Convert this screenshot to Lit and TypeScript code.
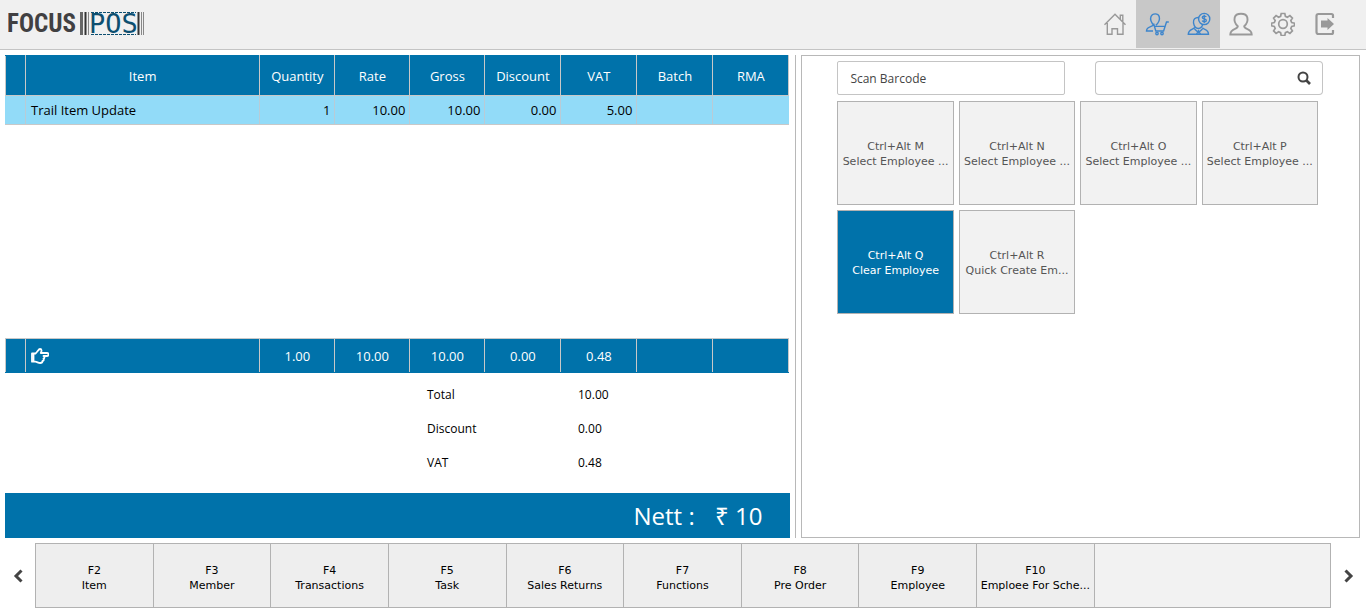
import { LitElement, html, css, svg } from "lit";
import { customElement } from "lit/decorators.js";
import { classMap } from "lit/directives/class-map.js";

const icons = {
  home: svg`<path d="M1.5 12.8 12 2.2l10.500 10.600M17.300 7.500V3.200h2.500v6.800M4.300 11v11.200h4.700v-5.500h5.500v5.500h5.500V11" />`,
  employee: svg`<path d="M9.500 14.300C6 10.500 5 7 6 4.500 7.500 1 13 1 14.200 4.500c.8 3-.8 6.500-3.400 8.800M8.400 12.800c-1 2.500-6.900 1.200-6.900 6.200H8M8.600 11.500l2.200 7.500h7.800l2.900-9h2.300M9.600 14.400h9.800" /><circle cx="12" cy="21.500" r="1.200" /><circle cx="17" cy="21.500" r="1.200" />`,
  sales: svg`<circle cx="17.200" cy="7" r="5.600" /><path d="M19.300 4.900c-1-1.200-4-1.100-4 .5 0 2 4 1 4 3 0 1.700-3.200 1.700-4.200.3M17.200 2.800v8.400M11.700 5.500c-3.500-.2-5.700 2-5.200 5.300.5 3 2.300 5.500 5 5.700 2.200-.2 3.600-1.900 4.300-4M8.200 15.300C6 17.700 1.300 17 1.300 22.300h20.200c0-5-4-4.300-6.200-6.500M7.500 17l4 3.500 4-3.500M9.500 22l2-3.200 2 3.200" />`,
  user: svg`<path stroke-width="1.900" d="M8.800 14.200C6 11.700 5 8.500 5.700 5.500c1.200-5 11.400-5 12.600 0 .7 3-.3 6.200-3.100 8.700-.4 3.600 7.500 1.600 7.500 8.300H1.300c0-6.700 7.900-4.700 7.500-8.300z" />`,
  gear: svg`<circle cx="12" cy="12" r="4.300" stroke-width="1.700" /><path stroke-width="1.700" d="M10.200 1.500h3.600l.6 2.800 2 .9 2.500-1.600 2.500 2.500-1.600 2.500.9 2 2.800.6v2.600l-2.800.6-.9 2 1.600 2.500-2.500 2.500-2.500-1.600-2 .9-.6 2.800h-3.600l-.6-2.800-2-.9-2.500 1.600-2.500-2.500 1.600-2.500-.9-2-2.800-.6v-2.600l2.800-.6.9-2-1.600-2.500 2.500-2.500 2.500 1.600 2-.9z" />`,
  exit: svg`<path d="M20 6V3.500Q20 2 18.500 2h-13Q3.500 2 3.500 4v16q0 2 2 2h13q1.500 0 1.500-1.500V18" stroke-width="2.200" /><path class="solid" d="M8 8.500h6.500V6l6.500 6-6.500 6v-2.500H8z" />`,
};

const menu = [
  { label: "Home", icon: icons.home, on: false },
  { label: "Employee", icon: icons.employee, on: true },
  { label: "Sales person", icon: icons.sales, on: true },
  { label: "User", icon: icons.user, on: false },
  { label: "Settings", icon: icons.gear, on: false },
  { label: "Log out", icon: icons.exit, on: false },
];

const headings = ["Item", "Quantity", "Rate", "Gross", "Discount", "VAT", "Batch", "RMA"];
const line = ["Trail Item Update", "1", "10.00", "10.00", "0.00", "5.00", "", ""];
const sums = ["1.00", "10.00", "10.00", "0.00", "0.48", "", ""];
const totals = [["Total", "10.00"], ["Discount", "0.00"], ["VAT", "0.48"]];

const tiles = [
  ["Ctrl+Alt M", "Select Employee ..."],
  ["Ctrl+Alt N", "Select Employee ..."],
  ["Ctrl+Alt O", "Select Employee ..."],
  ["Ctrl+Alt P", "Select Employee ..."],
  ["Ctrl+Alt Q", "Clear Employee"],
  ["Ctrl+Alt R", "Quick Create Em..."],
];

const functions = [
  ["F2", "Item"], ["F3", "Member"], ["F4", "Transactions"], ["F5", "Task"],
  ["F6", "Sales Returns"], ["F7", "Functions"], ["F8", "Pre Order"],
  ["F9", "Employee"], ["F10", "Emploee For Sche..."],
];

@customElement("app-root")
export class AppRoot extends LitElement {
  static styles = css`
    :host {
      display: flex;
      flex-direction: column;
      min-height: 100vh;
      box-sizing: border-box;
      background: #fff;
      color: #000;
      font: 13px/20px "Open Sans", sans-serif;
    }
    * { box-sizing: border-box; }
    button, input { font: inherit; color: inherit; margin: 0; }
    button { border: 0; padding: 0; background: none; cursor: pointer; }

    .top {
      display: flex;
      justify-content: space-between;
      height: 50px;
      padding: 0 20px 0 8px;
      background: #f0f0f0;
      border-bottom: 1px solid #c4c4c4;
    }
    .logo { display: block; width: 140px; height: 46px; }
    .word { font: bold 25px "Roboto Condensed", "DejaVu Sans Condensed", sans-serif; fill: #414042; }
    .mark { font: 27px "DejaVu Sans Mono", monospace; fill: #0d4f70; }
    .menu { display: flex; }
    .menu button { width: 42px; height: 48px; color: #999; }
    .menu .on { background: #c8c8c8; color: #3d85cc; }
    .menu svg { display: block; width: 24px; height: 24px; margin: auto; fill: none; stroke: currentColor; stroke-width: 1.4; }
    .solid { fill: currentColor; stroke: none; }

    .main { flex: 1; display: grid; grid-template-columns: 583fr 417fr; padding: 5px 0; }
    .sale { display: flex; flex-direction: column; min-width: 0; padding: 0 5px; border-right: 1px solid #b8b8b8; }
    table { width: calc(100% - 1px); table-layout: fixed; border-collapse: collapse; }
    .mark-col { width: 20px; }
    .num-col { width: 9.580%; }
    .wide-col { width: 9.700%; }
    th, td { padding: 0 5px; font-weight: 400; border: 1px solid #c8c8c8; }
    th, .sums td { background: #0072aa; color: #fff; text-align: center; }
    th { height: 40px; border-top-color: #0072aa; padding: 0; }
    .line td { height: 29px; background: #92dbf8; text-align: right; padding: 0 4px; border-left-color: #b9cbd6; border-right-color: #b9cbd6; }
    .line td:nth-child(2), .sums td:nth-child(2) { text-align: left; padding: 0 5px; }
    .line td:first-child { border-left-color: #92dbf8; }
    .line td:last-child { border-right-color: #92dbf8; }
    .space { flex: 1; }
    .sums td { height: 34px; border-bottom-color: #0072aa; }
    .hand { display: block; width: 18px; height: 16px; fill: none; stroke: #fff; stroke-width: 1.8; stroke-linejoin: round; }
    .totals { margin: 5px 0 13px; padding-left: 422px; font-size: 12px; line-height: 34px; }
    .totals div { display: grid; grid-template-columns: 151px 1fr; }
    .totals dt, .totals dd { margin: 0; font-weight: 500; }
    .nett { display: flex; justify-content: flex-end; gap: 20px; height: 45px; padding-right: 28px; background: #0072aa; color: #fff; font-size: 24px; line-height: 46px; }

    .side { padding: 0 6px 0 5px; display: grid; min-width: 0; }
    .panel { border: 1px solid #b8b8b8; padding: 5px 36px 0 35px; min-width: 0; }
    .fields { display: grid; grid-template-columns: 1fr 1fr; gap: 30px; margin-bottom: 6px; }
    .box { width: 100%; height: 34px; min-width: 0; padding: 0 12px; border: 1px solid #c4c4c4; border-radius: 2px; background: #fff; color: #555; font-size: 12px; outline: 0; }
    .box::placeholder { color: #444; opacity: 1; }
    .search { display: flex; }
    .search .box { flex: 1; border-right: 0; border-radius: 4px 0 0 4px; }
    .search button { width: 38px; border: 1px solid #c4c4c4; border-left: 0; border-radius: 0 4px 4px 0; background: #fff; }
    .search svg { display: block; width: 14px; height: 14px; margin: auto; fill: none; stroke: #444; stroke-width: 2; }
    .tiles { display: grid; grid-template-columns: repeat(4, 1fr); }
    .key { font: 11px/15px Verdana, "DejaVu Sans", sans-serif; text-align: center; min-width: 0; }
    .key span { display: block; white-space: nowrap; }
    .tile { height: 104px; margin: 0 5px 5px 0; padding: 2px 2px 0; border: 1px solid #b2b2b2; background: #f2f2f2; color: #555; }
    .tile.on { background: #0072aa; color: #fff; }

    .bottom { display: flex; height: 70px; padding-bottom: 5px; }
    .arrow { width: 35px; }
    .arrow svg { display: block; width: 12px; height: 16px; margin: auto; fill: none; stroke: #444; stroke-width: 3; }
    .functions { flex: 1; min-width: 0; display: grid; grid-template-columns: repeat(11, 1fr); border: 1px solid #b2b2b2; background: #f2f2f2; }
    .function { padding: 4px 2px 0; border-right: 1px solid #b2b2b2; background: #eee; }
  `;

  private columns() {
    return html`<colgroup>
      <col class="mark-col" /><col />
      ${sums.map((_, i) => html`<col class=${i < 3 ? "num-col" : "wide-col"} />`)}
    </colgroup>`;
  }

  render() {
    return html`
      <header class="top">
        <svg class="logo" viewBox="0 0 140 46" role="img" aria-label="Focus POS">
          <text class="word" x="-1" y="32">FOCUS</text>
          <path d="M73.500 12v23" stroke="#666" stroke-width="3" />
          <path d="M77.500 12v23M130.500 12v23" stroke="#333" stroke-width="2" />
          <path d="M80.500 12v23M133.500 12v23M135.500 12v23" stroke="#888" stroke-width="1" />
          <text class="mark" x="81" y="33">POS</text>
          <path d="M83 12.500h45M83 34.500h45" stroke="#0d4f70" stroke-dasharray="3 1" />
        </svg>
        <nav class="menu">
          ${menu.map((m) => html`<button class=${classMap({ on: m.on })} aria-label=${m.label}>
            <svg viewBox="0 0 24 24">${m.icon}</svg>
          </button>`)}
        </nav>
      </header>

      <main class="main">
        <section class="sale">
          <table>
            ${this.columns()}
            <thead><tr><th></th>${headings.map((h) => html`<th scope="col">${h}</th>`)}</tr></thead>
            <tbody><tr class="line"><td></td>${line.map((c) => html`<td>${c}</td>`)}</tr></tbody>
          </table>
          <div class="space"></div>
          <table>
            ${this.columns()}
            <tbody><tr class="sums">
              <td></td>
              <td><svg class="hand" viewBox="0 0 18 16"><path d="M1 5.500h3.500C6.500 4 7.500 1 9 1c2 0 1.800 2 .8 4H16c2 0 2 3 0 3h-3.500c1.500 1 1 2.500 0 2.700.6 1.300 0 2.200-1 2.300 0 1.500-1 2-2.300 2-2.200 0-3-1.300-5-1.300H1z" /><path d="M2.500 6v7" /></svg></td>
              ${sums.map((s) => html`<td>${s}</td>`)}
            </tr></tbody>
          </table>
          <dl class="totals">
            ${totals.map(([k, v]) => html`<div><dt>${k}</dt><dd>${v}</dd></div>`)}
          </dl>
          <div class="nett"><span>Nett :</span><span>₹ 10</span></div>
        </section>

        <section class="side">
          <div class="panel">
            <div class="fields">
              <input class="box" aria-label="Scan Barcode" placeholder="Scan Barcode" />
              <div class="search">
                <input class="box" aria-label="Search" />
                <button aria-label="Search"><svg viewBox="0 0 14 14"><circle cx="6" cy="6" r="4.500" /><path d="m9 9 4 4" stroke-width="2.600" /></svg></button>
              </div>
            </div>
            <div class="tiles">
              ${tiles.map(([k, t]) => html`<button class=${classMap({ key: true, tile: true, on: t === "Clear Employee" })}>
                <span>${k}</span><span>${t}</span>
              </button>`)}
            </div>
          </div>
        </section>
      </main>

      <footer class="bottom">
        <button class="arrow" aria-label="Previous"><svg viewBox="0 0 12 16"><path d="M9.500 2.500 4 8l5.500 5.500" /></svg></button>
        <div class="functions">
          ${functions.map(([k, t]) => html`<button class="key function"><span>${k}</span><span>${t}</span></button>`)}
        </div>
        <button class="arrow" aria-label="Next"><svg viewBox="0 0 12 16"><path d="M2.500 2.500 8 8l-5.500 5.500" /></svg></button>
      </footer>
    `;
  }
}
